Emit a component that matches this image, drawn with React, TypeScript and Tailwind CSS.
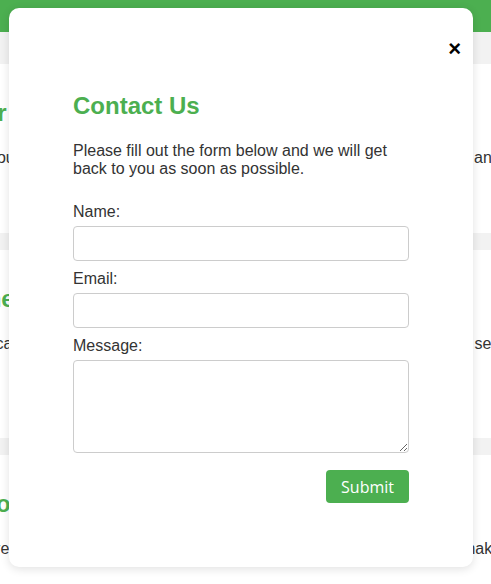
import React from "react";

const sections = [
  {
    h: "h-[169px]",
    title: "Our Mission",
    text: "Do you want to learn more about what we do? Here's who we really are and what drives us every day.",
  },
  {
    h: "h-[188px]",
    title: "Where We Are",
    text: "You can find us right in the heart of the old town, just a short walk away, serving fresh food daily.",
  },
  {
    h: "h-[140px]",
    title: "Book a Table",
    text: "Our reservations are quick and simple. Just call us or fill in the form to make a booking today.",
  },
];

export default function App() {
  return (
    <div className="relative w-full h-[584px] overflow-hidden bg-[#f2f2f2] font-['Liberation_Sans',Arial,sans-serif]">
      <div className="h-[32px] bg-[#4caf50]" />
      <main className="pt-[32px] flex flex-col gap-[17px]">
        {sections.map((s) => (
          <section key={s.title} className={`bg-white ${s.h} flex justify-center`}>
            <div className="w-[563px] shrink-0 pt-[35px]">
              <h2 className="text-[24px] leading-[28px] font-bold text-[#4caf50] whitespace-nowrap">{s.title}</h2>
              <p className="mt-[22px] text-[16px] leading-[18.4px] text-[#333] whitespace-nowrap">{s.text}</p>
            </div>
          </section>
        ))}
      </main>

      <div className="absolute left-[9px] top-[8px] w-[464px] bg-white rounded-[10px] shadow-[0_2px_10px_rgba(0,0,0,0.12)] px-[64px] pt-[84px] pb-[64px]">
        <span className="absolute right-[12px] top-[28px] text-[22px] leading-[25px] font-bold text-black cursor-pointer">
          ×
        </span>
        <h2 className="text-[24px] leading-[28px] font-bold text-[#4caf50]">Contact Us</h2>
        <p className="mt-[22px] text-[16px] leading-[18.4px] text-[#333]">
          Please fill out the form below and we will get back to you as soon as possible.
        </p>
        <form className="mt-[24px] flex flex-col" onSubmit={(e) => e.preventDefault()}>
          <label htmlFor="name" className="block text-[16px] leading-[18.4px] text-[#333]">
            Name:
          </label>
          <input
            id="name"
            type="text"
            className="mt-[4.5px] h-[35px] w-full border border-[#ccc] rounded-[4px] px-[8px] text-[16px] outline-none"
          />
          <label htmlFor="email" className="mt-[9px] block text-[16px] leading-[18.4px] text-[#333]">
            Email:
          </label>
          <input
            id="email"
            type="email"
            className="mt-[4.5px] h-[35px] w-full border border-[#ccc] rounded-[4px] px-[8px] text-[16px] outline-none"
          />
          <label htmlFor="message" className="mt-[9px] block text-[16px] leading-[18.4px] text-[#333]">
            Message:
          </label>
          <textarea
            id="message"
            className="mt-[4.5px] h-[93px] w-full border border-[#ccc] rounded-[4px] px-[8px] py-[4px] text-[16px] outline-none"
          />
          <div className="mt-[17.5px] flex justify-end">
            <button
              type="submit"
              className="h-[33px] px-[15px] bg-[#4caf50] text-white rounded-[4px] text-[16px] font-['Open_Sans',sans-serif]"
            >
              Submit
            </button>
          </div>
        </form>
      </div>
    </div>
  );
}
